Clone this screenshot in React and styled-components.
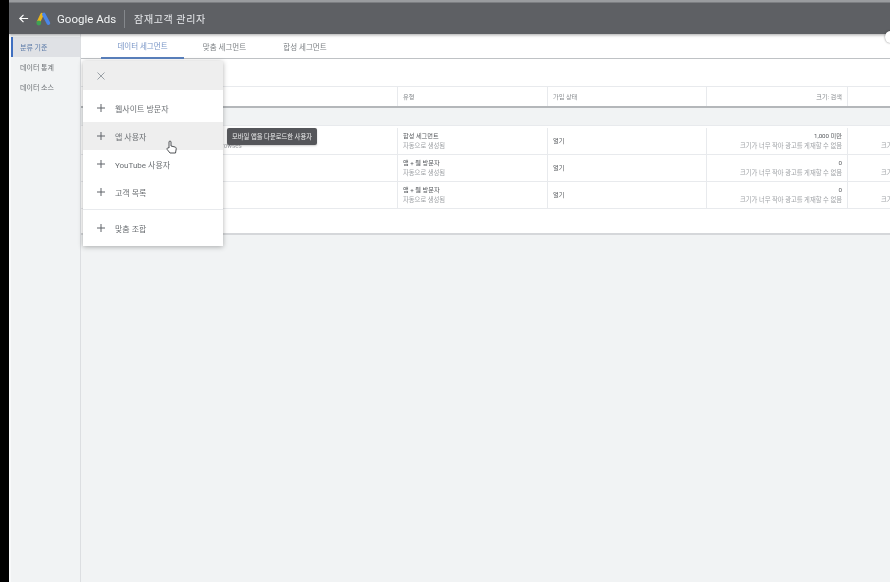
import React from 'react';
import styled, { createGlobalStyle } from 'styled-components';

const Global = createGlobalStyle`
  html, body {
    margin: 0;
    height: 100%;
    overflow: hidden;
    background: #000;
  }
  #root { height: 100%; }
  * { box-sizing: border-box; }
`;

const Page = styled.div`
  width: 890px;
  height: 582px;
  padding-left: 9px;
  background: #000;
  font-family: Roboto, "Noto Sans CJK KR", sans-serif;
  overflow: hidden;
`;

const Screen = styled.div`
  position: relative;
  height: 100%;
  display: flex;
  flex-direction: column;
  background: #f1f3f4;
  overflow: hidden;
  filter: blur(0.35px);
`;

const Header = styled.header`
  height: 34px;
  flex: none;
  display: flex;
  align-items: center;
  padding: 3px 0 0 9px;
  background: linear-gradient(#9a9c9f 0, #9a9c9f 2px, #5e6064 3px);
  box-shadow: 0 1px 3px rgba(0, 0, 0, 0.35);
  color: #fff;
  z-index: 2;
`;

const BackIcon = styled.svg`
  width: 11px;
  height: 11px;
  margin-right: 7px;
`;

const Logo = styled.svg`
  width: 15px;
  height: 14px;
  margin-right: 6px;
`;

const Brand = styled.span`
  font-size: 11.5px;
  color: #f1f3f4;
  white-space: nowrap;
`;

const HeaderDivider = styled.span`
  width: 1px;
  height: 18px;
  margin: 0 9px 0 8px;
  background: #85888c;
`;

const HeaderTitle = styled.span`
  font-size: 10px;
  color: #e8eaed;
  letter-spacing: 0.6px;
`;

const Body = styled.div`
  flex: 1;
  display: flex;
  min-height: 0;
`;

const Sidebar = styled.nav`
  width: 72px;
  flex: none;
  display: flex;
  flex-direction: column;
  padding: 3px 0 0 2px;
  background: #f1f3f4;
  border-right: 1px solid #dcdee1;
  box-shadow: inset 2px 0 0 #f8f9fa;
`;

const SideItem = styled.div`
  height: 20px;
  display: flex;
  align-items: center;
  padding-left: ${p => (p.$active ? '7px' : '9px')};
  font-size: 7px;
  color: ${p => (p.$active ? '#5b7aa8' : '#6b6f73')};
  background: ${p => (p.$active ? '#dfe1e5' : 'transparent')};
  border-left: ${p => (p.$active ? '2px solid #3f6fc0' : 'none')};
`;

const Main = styled.main`
  flex: 1;
  min-width: 0;
  display: flex;
  flex-direction: column;
`;

const Tabs = styled.div`
  height: 25px;
  flex: none;
  display: flex;
  padding-left: 20px;
  background: #fff;
  border-bottom: 1px solid #bfc2c5;
`;

const Tab = styled.div`
  width: ${p => p.$width}px;
  display: flex;
  align-items: center;
  justify-content: center;
  font-size: 7.5px;
  color: ${p => (p.$active ? '#7794c6' : '#7c8084')};
  border-bottom: ${p => (p.$active ? '2px solid #5a80bd' : 'none')};
  margin-bottom: -1px;
`;

const Toolbar = styled.div`
  height: 28px;
  flex: none;
  background: #fff;
  border-bottom: 1px solid #e8eaed;
`;

const Table = styled.div`
  flex: none;
  width: 908px;
  background: #fff;
  border-bottom: 2px solid #d5d7da;
`;

const Row = styled.div`
  display: grid;
  grid-template-columns: 317px 150px 159px 141px 141px;
  height: ${p => p.$height}px;
  border-bottom: 1px solid #e8eaed;
`;

const HeadRow = styled(Row)`
  border-bottom: 2px solid #b4b7ba;
`;

const SummaryRow = styled.div`
  height: 18px;
  background: #f1f3f4;
  border-bottom: 1px solid #e8eaed;
`;

const Spacer = styled.div`
  height: 2px;
`;

const Cell = styled.div`
  display: flex;
  flex-direction: column;
  justify-content: center;
  align-items: ${p => (p.$right ? 'flex-end' : 'flex-start')};
  padding: 0 5px;
  border-right: 1px solid #e8eaed;
  overflow: hidden;
  white-space: nowrap;
`;

const HeadText = styled.span`
  font-size: 6.2px;
  color: #85898d;
`;

const Primary = styled.span`
  font-size: 6.2px;
  line-height: 10px;
  color: #55585c;
`;

const Secondary = styled.span`
  font-size: 6.3px;
  line-height: 10px;
  color: #a0a3a7;
`;

const Footer = styled.div`
  height: 24px;
  background: #fff;
`;

const Menu = styled.div`
  position: absolute;
  left: 74px;
  top: 61px;
  width: 140px;
  background: #fff;
  box-shadow: 0 1px 5px rgba(0, 0, 0, 0.3);
  z-index: 3;
`;

const MenuHead = styled.div`
  height: 29px;
  display: flex;
  align-items: center;
  padding-left: 14px;
  background: #eeeeee;
`;

const MenuList = styled.div`
  padding: 4px 0;
`;

const MenuItem = styled.div`
  position: relative;
  height: 28px;
  display: flex;
  align-items: center;
  padding-left: 14px;
  gap: 10px;
  font-size: 8px;
  color: #6b6f73;
  background: ${p => (p.$hover ? '#eeeeee' : 'transparent')};
`;

const MenuDivider = styled.div`
  height: 1px;
  margin: 3px 0 4px;
  background: #e8eaed;
`;

const Tip = styled.div`
  position: absolute;
  left: 144px;
  top: 6px;
  height: 17px;
  padding: 0 5px;
  display: flex;
  align-items: center;
  background: #55565a;
  border-radius: 2px;
  color: #eceded;
  font-size: 6.3px;
  white-space: nowrap;
  box-shadow: 0 1px 2px rgba(0, 0, 0, 0.2);
  z-index: 4;
`;

const Cursor = styled.svg`
  position: absolute;
  left: 83px;
  top: 18px;
  width: 11px;
  height: 15px;
`;

const Knob = styled.div`
  position: absolute;
  right: -5px;
  top: 31px;
  width: 10px;
  height: 12px;
  border-radius: 50%;
  background: #fff;
  box-shadow: 0 0 2px rgba(0, 0, 0, 0.5);
  z-index: 3;
`;

const Plus = () => (
  <svg width="8" height="8" viewBox="0 0 8 8">
    <path d="M4 0v8M0 4h8" stroke="#5f6368" strokeWidth="1" fill="none" />
  </svg>
);

const SMALL_SIZE = '크기가 너무 작아 광고를 게재할 수 없음';

const rows = [
  { type: '합성 세그먼트', size: '1,000 미만', note: 'Users who have downloaded the mobile app or browses' },
  { type: '앱 + 웹 방문자', size: '0' },
  { type: '앱 + 웹 방문자', size: '0' },
];

const menuItems = ['웹사이트 방문자', '앱 사용자', 'YouTube 사용자', '고객 목록'];

export default function App() {
  return (
    <>
      <Global />
      <Page>
        <Screen>
          <Header>
            <BackIcon viewBox="0 0 12 12">
              <path d="M11 6H2M6 2L2 6l4 4" stroke="#fff" strokeWidth="1.3" fill="none" />
            </BackIcon>
            <Logo viewBox="0 0 15 14">
              <path d="M6 2.5L2.5 10" stroke="#e8b51c" strokeWidth="3.4" strokeLinecap="round" />
              <path d="M7.8 2.5l4.6 8.7" stroke="#4a86e8" strokeWidth="3.6" strokeLinecap="round" />
              <circle cx="2.8" cy="11" r="2.4" fill="#3fa254" />
            </Logo>
            <Brand>Google Ads</Brand>
            <HeaderDivider />
            <HeaderTitle>잠재고객 관리자</HeaderTitle>
          </Header>
          <Body>
            <Sidebar>
              <SideItem $active>분류 기준</SideItem>
              <SideItem>데이터 통계</SideItem>
              <SideItem>데이터 소스</SideItem>
            </Sidebar>
            <Main>
              <Tabs>
                <Tab $active $width={83}>데이터 세그먼트</Tab>
                <Tab $width={81}>맞춤 세그먼트</Tab>
                <Tab $width={80}>합성 세그먼트</Tab>
              </Tabs>
              <Toolbar />
              <Table>
                <HeadRow $height={21}>
                  <Cell />
                  <Cell><HeadText>유형</HeadText></Cell>
                  <Cell><HeadText>가입 상태</HeadText></Cell>
                  <Cell $right><HeadText>크기: 검색</HeadText></Cell>
                  <Cell />
                </HeadRow>
                <SummaryRow />
                <Spacer />
                {rows.map((row, i) => (
                  <Row key={i} $height={27}>
                    <Cell>
                      <Primary>&nbsp;</Primary>
                      <Secondary>{row.note}</Secondary>
                    </Cell>
                    <Cell>
                      <Primary>{row.type}</Primary>
                      <Secondary>자동으로 생성됨</Secondary>
                    </Cell>
                    <Cell><Primary>열기</Primary></Cell>
                    <Cell $right>
                      <Primary>{row.size}</Primary>
                      <Secondary>{SMALL_SIZE}</Secondary>
                    </Cell>
                    <Cell $right>
                      <Primary>{row.size}</Primary>
                      <Secondary>{SMALL_SIZE}</Secondary>
                    </Cell>
                  </Row>
                ))}
                <Footer />
              </Table>
            </Main>
          </Body>
          <Menu>
            <MenuHead>
              <svg width="8" height="8" viewBox="0 0 8 8">
                <path d="M0.5 0.5l7 7M7.5 0.5l-7 7" stroke="#9aa0a6" strokeWidth="1" fill="none" />
              </svg>
            </MenuHead>
            <MenuList>
              {menuItems.map((label, i) => (
                <MenuItem key={label} $hover={i === 1}>
                  <Plus />
                  {label}
                  {i === 1 && (
                    <>
                      <Tip>모바일 앱을 다운로드한 사용자</Tip>
                      <Cursor viewBox="0 0 11 15">
                        <path d="M3 8V2c0-1.3 2-1.3 2 0v4l4 1c1 .3 1.3 1 1.2 2l-.7 4H4L1.2 9.5C.5 8.3 2 7.3 3 8z" fill="#fff" stroke="#3c4043" strokeWidth="0.9" />
                      </Cursor>
                    </>
                  )}
                </MenuItem>
              ))}
              <MenuDivider />
              <MenuItem>
                <Plus />
                맞춤 조합
              </MenuItem>
            </MenuList>
          </Menu>
          <Knob />
        </Screen>
      </Page>
    </>
  );
}
